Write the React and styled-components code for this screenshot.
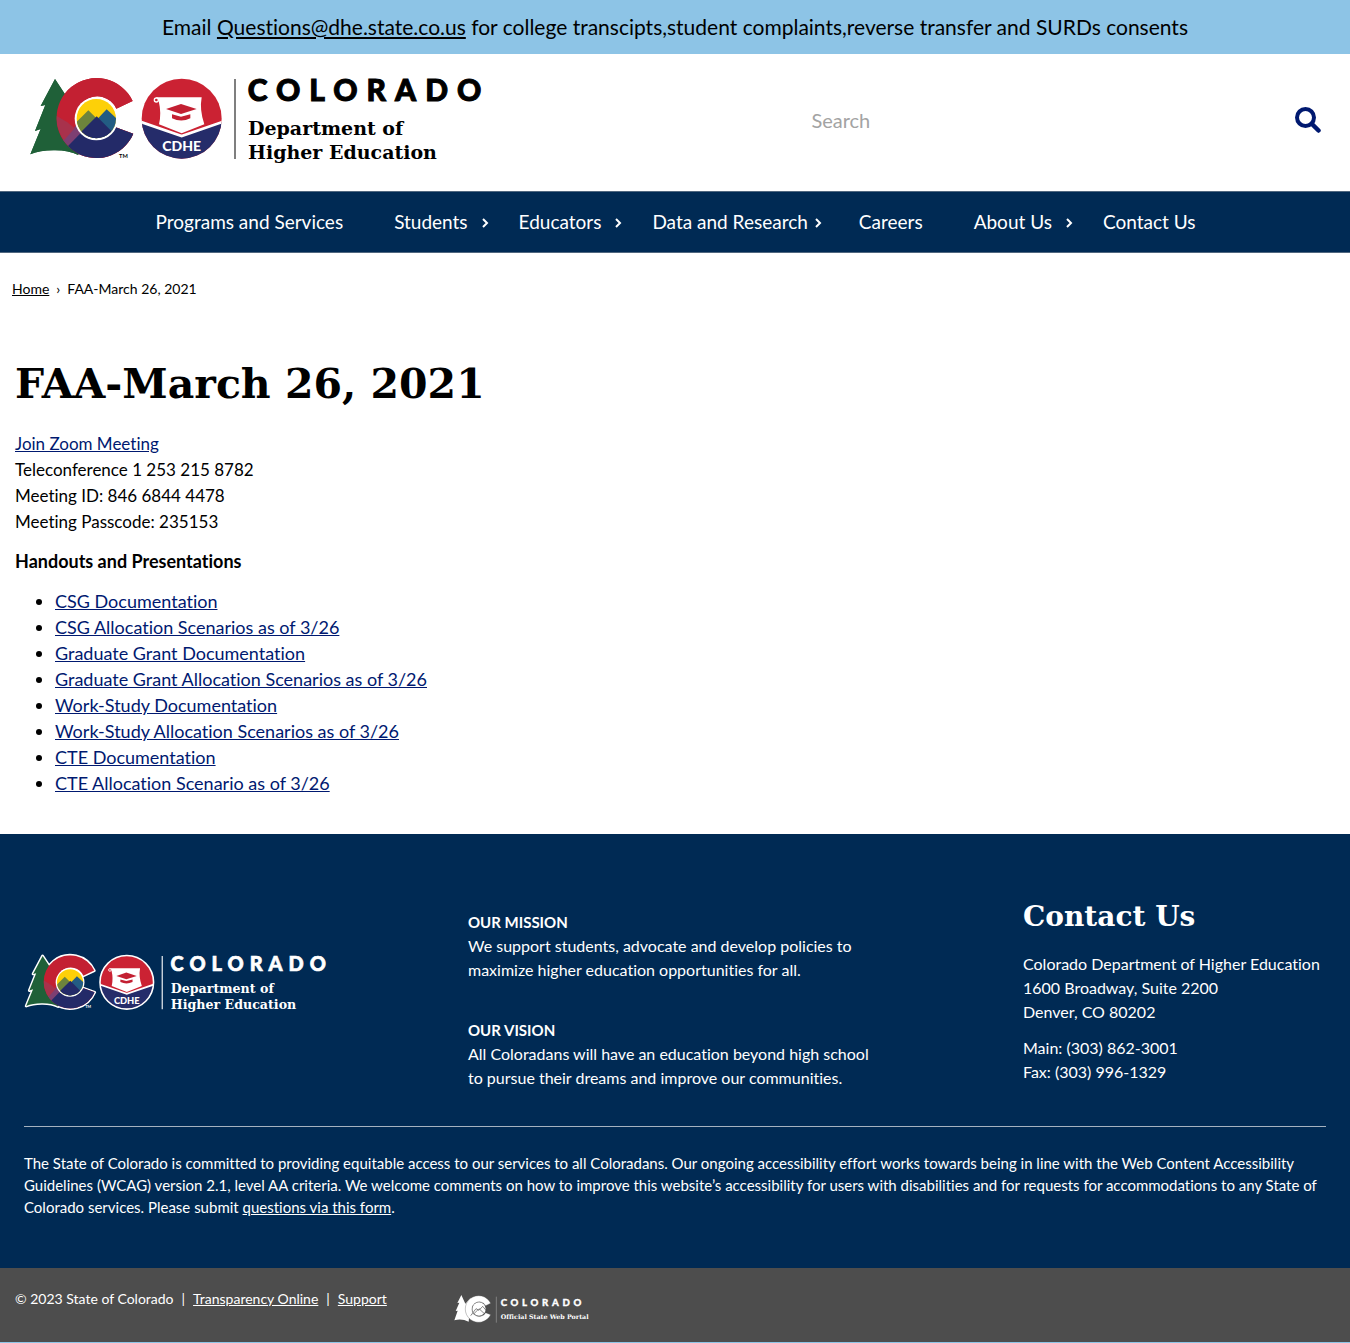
import React from "react";
import styled, { createGlobalStyle } from "styled-components";

const navy = "#002a54";
const sans = '"Lato", "Noto Sans", sans-serif';
const slab = '"DejaVu Serif", serif';

const GlobalStyle = createGlobalStyle`
  * { box-sizing: border-box; }
  body {
    margin: 0;
    background: #8dc4e6;
    color: #000;
    font-family: ${sans};
    font-size: 17px;
    line-height: 26px;
    font-variant-ligatures: none;
  }
  a { color: inherit; }
  p, h1, h2, h3, ul, ol { margin: 0; padding: 0; }
`;

const Banner = styled.div`
  padding: 12px 16px 12px;
  background: #8dc4e6;
  text-align: center;
  font-size: 21px;
  line-height: 30px;
`;

const Header = styled.header`
  display: flex;
  justify-content: space-between;
  padding: 13px 29px 27px 27px;
  background: #fff;
`;

const HomeLink = styled.a`
  display: block;
  line-height: 0;
`;

const SearchForm = styled.form`
  display: flex;
  align-items: center;
  align-self: center;
  width: 40%;
  height: 48px;
  margin-top: 8px;
`;

const SearchInput = styled.input`
  flex: 1;
  min-width: 0;
  padding: 0 8px;
  border: 0;
  outline: 0;
  background: transparent;
  font: 20px/30px ${sans};
  &::placeholder { color: #a3a3a3; opacity: 1; }
`;

const SearchButton = styled.button`
  display: flex;
  padding: 0;
  border: 0;
  background: transparent;
  color: #001970;
`;

const Nav = styled.nav`
  background: ${navy};
  border: solid #50677f;
  border-width: 1px 0;
`;

const NavList = styled.ul`
  display: flex;
  justify-content: center;
  list-style: none;
`;

const NavItem = styled.li`
  display: flex;
  align-items: center;
  padding: 17px 0 17px 26px;
  color: #fff;
  font-size: 19px;
  white-space: nowrap;
`;

const NavLink = styled.a`
  margin-right: ${(p) => (p.$menu ? 0 : 25)}px;
  color: inherit;
  text-decoration: none;
`;

const NavToggle = styled.button`
  display: flex;
  justify-content: ${(p) => (p.$tight ? "flex-start" : "flex-end")};
  width: 25px;
  padding: 2px 4px 0 6px;
  border: 0;
  background: transparent;
  color: inherit;
`;

const Main = styled.main`
  padding: 23px 15px 38px;
  background: #fff;
`;

const Crumbs = styled.ol`
  display: flex;
  gap: 7px;
  margin-left: -3px;
  list-style: none;
  font-size: 14px;
`;

const Title = styled.h1`
  margin-top: 50px;
  font: bold 41px/64px ${slab};
`;

const Details = styled.p`
  margin-top: 15px;
`;

const Subhead = styled.p`
  margin-top: 13px;
  font-size: 18px;
  font-weight: bold;
`;

const DocList = styled.ul`
  margin-top: 14px;
  padding-left: 40px;
  font-size: 18px;
`;

const TextLink = styled.a`
  color: #001970;
  text-decoration: underline;
`;

const Footer = styled.footer`
  padding: 60px 24px 50px;
  background: ${navy};
  color: #fff;
  font-size: 16px;
  line-height: 24px;
`;

const FooterGrid = styled.div`
  display: grid;
  grid-template-columns: 444fr 555fr 303fr;
  padding-bottom: 36px;
  border-bottom: 1px solid #a5b2c0;
`;

const FooterBrand = styled.div`
  padding-top: 54px;
`;

const Mission = styled.div`
  display: grid;
  gap: 36px;
  padding-top: 16px;
`;

const Statement = styled.p`
  white-space: nowrap;
`;

const StatementTitle = styled.strong`
  font-size: 15px;
`;

const Contact = styled.address`
  font-style: normal;
  white-space: nowrap;
`;

const ContactTitle = styled.h2`
  margin-bottom: 12px;
  font: bold 28px/46px ${slab};
`;

const Phones = styled.p`
  margin-top: 12px;
`;

const Access = styled.p`
  padding-top: 25px;
  font-size: 15px;
  line-height: 22px;
`;

const BottomBar = styled.div`
  display: flex;
  gap: 67px;
  padding: 20px 15px 17px;
  background: #4d4d4d;
  color: #fff;
  font-size: 14px;
  line-height: 22px;
`;

const Legal = styled.div`
  display: flex;
  gap: 8px;
`;

const PortalLink = styled.a`
  padding-top: 5px;
  line-height: 0;
`;

const Wordmark = styled.text`
  font-family: Lato, sans-serif;
  font-weight: 900;
  letter-spacing: ${(p) => p.$tracking}px;
`;

const SlabText = styled.text`
  font-family: ${slab};
  font-weight: bold;
`;

function Logo({ width, reversed, id }) {
  const ink = reversed ? "#fff" : "#000";
  const outline = reversed ? "#fff" : "none";
  const cShape =
    "M338 108 A120 120 0 1 0 340 206 L287 187 A63 63 0 1 1 289 131 Z";
  const tree =
    "M105 42 L62 123 L76 120 L45 198 L62 192 L31 268 Q60 256 100 256 Q145 255 175 270 L190 60 L140 95 Z";
  return (
    <svg width={width} viewBox="21 6 1386 291" role="img" aria-label="Colorado Department of Higher Education">
      <defs>
        <clipPath id={`${id}-c`}><path d={cShape} /></clipPath>
        <clipPath id={`${id}-sun`}><circle cx="229" cy="161" r="59" /></clipPath>
        <clipPath id={`${id}-seal`}><circle cx="485" cy="161" r="120" /></clipPath>
      </defs>
      <g stroke={outline} strokeWidth="13" strokeLinejoin="round">
        <path d={tree} fill="#1f6038" />
        <path d={cShape} fill="#c32032" />
      </g>
      <path d={tree} fill="#1f6038" />
      <g clipPath={`url(#${id}-c)`}>
        <rect x="100" y="30" width="260" height="260" fill="#c32032" />
        <path d="M128 225 L205 142 L230 165 L150 250Z" fill="#7d3f72" />
        <path d="M106 150 Q112 200 132 226 L164 190 L142 172Z" fill="#a8324c" />
        <path d="M142 245 L230 155 L360 182 L360 290 L142 290Z" fill="#232a68" />
      </g>
      <circle cx="229" cy="161" r="65" fill="#fff" />
      <g clipPath={`url(#${id}-sun)`}>
        <rect x="165" y="95" width="130" height="130" fill="#fdd008" />
        <path d="M160 180 L205 136 L250 180 L220 225 L160 225Z" fill="#6d843c" />
        <path d="M215 180 L260 133 L300 170 L300 225 L215 225Z" fill="#235c83" />
        <path d="M160 224 L230 154 L300 224 L300 240 L160 240Z" fill="#232a68" />
      </g>
      <text x="297" y="279" fontSize="17" fontWeight="bold" fontFamily="Lato, sans-serif" fill={ink}>TM</text>
      <g clipPath={`url(#${id}-seal)`}>
        <rect x="360" y="36" width="250" height="250" fill="#cb2233" />
        <path d="M360 170 L485 213 L610 170 L610 290 L360 290Z" fill="#252c6a" />
        <path d="M360 170 L485 213 L610 170" fill="none" stroke="#fff" strokeWidth="8" />
      </g>
      {reversed && <circle cx="485" cy="161" r="121" fill="none" stroke="#fff" strokeWidth="7" />}
      <path d="M408 97 L545 97 Q538 135 553 178 L485 205 L417 178 Q425 145 416 108 Z" fill="#fff" />
      <circle cx="409" cy="105" r="6" fill="#cb2233" stroke="#fff" strokeWidth="4" />
      <path d="M438 132 L483 117 L530 132 L483 147 Z" fill="#c32032" />
      <path d="M456 148 L483 155 L511 148 L511 160 Q484 173 456 160 Z" fill="#c32032" />
      <text x="485" y="258" textAnchor="middle" fontSize="42" fontWeight="900" fontFamily="Lato, sans-serif" fill="#fff">CDHE</text>
      <path d="M645 42V282" stroke={reversed ? "#fff" : "#666"} strokeWidth="5" />
      <Wordmark x="683" y="108" fontSize="90" $tracking={27} fill={ink} stroke={ink} strokeWidth="3">COLORADO</Wordmark>
      <SlabText x="684" y="209" fontSize="57" fill={ink}>Department of</SlabText>
      <SlabText x="684" y="281" fontSize="57" fill={ink}>Higher Education</SlabText>
    </svg>
  );
}

function PortalLogo() {
  return (
    <svg width="138" viewBox="42 98 414 95" role="img" aria-label="Colorado Official State Web Portal">
      <path d="M64 104 L52 128 L58 127 L47 152 L53 151 L43 180 Q65 174 86 184 L92 112 L76 130Z" fill="#fff" />
      <path d="M152 129 A40 40 0 1 0 152 163 L137 157 A22 22 0 1 1 137 136Z" fill="#fff" stroke="#4d4d4d" strokeWidth="1" />
      <circle cx="117" cy="146" r="20" fill="#fff" />
      <path d="M92 166 L108 145 L117 150 L128 138 L138 150 M100 162 L117 145 L133 160" fill="none" stroke="#4d4d4d" strokeWidth="2" />
      <path d="M169 109V187" stroke="#999" strokeWidth="2" />
      <Wordmark x="182" y="138" fontSize="29" $tracking={11} fill="#fff" stroke="#fff" strokeWidth="1">COLORADO</Wordmark>
      <SlabText x="182" y="175" fontSize="19" fill="#fff">Official State Web Portal</SlabText>
    </svg>
  );
}

const Chevron = () => (
  <svg width="8" height="10" viewBox="0 0 8 10" aria-hidden="true">
    <path d="M2 1 L6 5 L2 9" fill="none" stroke="currentColor" strokeWidth="2" />
  </svg>
);

const navItems = [
  { label: "Programs and Services" },
  { label: "Students", menu: true },
  { label: "Educators", menu: true },
  { label: "Data and Research", menu: true, tight: true },
  { label: "Careers" },
  { label: "About Us", menu: true },
  { label: "Contact Us" },
];

const documents = [
  "CSG Documentation",
  "CSG Allocation Scenarios as of 3/26",
  "Graduate Grant Documentation",
  "Graduate Grant Allocation Scenarios as of 3/26",
  "Work-Study Documentation",
  "Work-Study Allocation Scenarios as of 3/26",
  "CTE Documentation",
  "CTE Allocation Scenario as of 3/26",
];

export default function App() {
  return (
    <>
      <GlobalStyle />
      <Banner>
        Email <a href="mailto:Questions@dhe.state.co.us">Questions@dhe.state.co.us</a> for college
        transcipts,student complaints,reverse transfer and SURDs consents
      </Banner>
      <Header>
        <HomeLink href="#home"><Logo id="top" width="462" /></HomeLink>
        <SearchForm role="search">
          <SearchInput type="search" aria-label="Search" placeholder="Search" />
          <SearchButton type="button" aria-label="Submit search">
            <svg width="26" height="26" viewBox="0 0 26 26" aria-hidden="true">
              <circle cx="10.5" cy="10.5" r="8.5" fill="none" stroke="currentColor" strokeWidth="4" />
              <path d="M17 17 L23.5 23.5" stroke="currentColor" strokeWidth="4.5" strokeLinecap="round" />
            </svg>
          </SearchButton>
        </SearchForm>
      </Header>
      <Nav aria-label="Main">
        <NavList>
          {navItems.map((item) => (
            <NavItem key={item.label}>
              <NavLink href="#menu" $menu={item.menu}>{item.label}</NavLink>
              {item.menu && (
                <NavToggle type="button" $tight={item.tight} aria-label={`${item.label} menu`}>
                  <Chevron />
                </NavToggle>
              )}
            </NavItem>
          ))}
        </NavList>
      </Nav>
      <Main>
        <Crumbs>
          <li><a href="#home">Home</a></li>
          <li aria-hidden="true">›</li>
          <li>FAA-March 26, 2021</li>
        </Crumbs>
        <Title>FAA-March 26, 2021</Title>
        <Details>
          <TextLink href="#zoom">Join Zoom Meeting</TextLink><br />
          Teleconference 1 253 215 8782<br />
          Meeting ID: 846 6844 4478<br />
          Meeting Passcode: 235153
        </Details>
        <Subhead>Handouts and Presentations</Subhead>
        <DocList>
          {documents.map((name) => (
            <li key={name}><TextLink href="#document">{name}</TextLink></li>
          ))}
        </DocList>
      </Main>
      <Footer>
        <FooterGrid>
          <FooterBrand><Logo id="foot" width="307" reversed /></FooterBrand>
          <Mission>
            <Statement>
              <StatementTitle>OUR MISSION</StatementTitle><br />
              We support students, advocate and develop policies to<br />
              maximize higher education opportunities for all.
            </Statement>
            <Statement>
              <StatementTitle>OUR VISION</StatementTitle><br />
              All Coloradans will have an education beyond high school<br />
              to pursue their dreams and improve our communities.
            </Statement>
          </Mission>
          <Contact>
            <ContactTitle>Contact Us</ContactTitle>
            <p>
              Colorado Department of Higher Education<br />
              1600 Broadway, Suite 2200<br />
              Denver, CO 80202
            </p>
            <Phones>
              Main: (303) 862-3001<br />
              Fax: (303) 996-1329
            </Phones>
          </Contact>
        </FooterGrid>
        <Access>
          The State of Colorado is committed to providing equitable access to our services to all
          Coloradans. Our ongoing accessibility effort works towards being in line with the Web
          Content Accessibility Guidelines (WCAG) version 2.1, level AA criteria. We welcome comments
          on how to improve this website’s accessibility for users with disabilities and for requests
          for accommodations to any State of Colorado services. Please submit{" "}
          <a href="#form">questions via this form</a>.
        </Access>
      </Footer>
      <BottomBar>
        <Legal>
          <span>© 2023 State of Colorado</span>
          <span>|</span>
          <a href="#transparency">Transparency Online</a>
          <span>|</span>
          <a href="#support">Support</a>
        </Legal>
        <PortalLink href="#portal"><PortalLogo /></PortalLink>
      </BottomBar>
    </>
  );
}
